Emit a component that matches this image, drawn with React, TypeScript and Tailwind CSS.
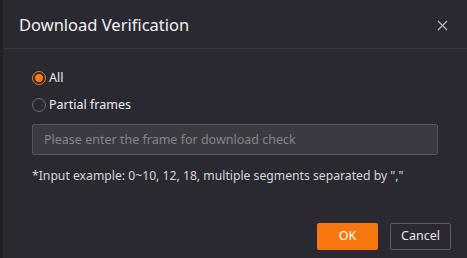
import { useState } from "react";

export default function App() {
  const [mode, setMode] = useState<"all" | "partial">("all");
  const [frames, setFrames] = useState("");

  const options: { key: "all" | "partial"; label: string }[] = [
    { key: "all", label: "All" },
    { key: "partial", label: "Partial frames" },
  ];

  return (
    <div
      className="w-[467px] h-[258px] flex bg-[#1f1f25]"
      style={{ fontFamily: '"Noto Sans", "Open Sans", sans-serif' }}
    >
      <div className="ml-[3px] flex-1 flex flex-col bg-[#2a2931] text-[#e6e6ea]">
        {/* HEADER */}
        <div className="h-[49px] shrink-0 flex items-center justify-between pl-[16px] pr-[19px] border-b border-[#35343c]">
          <h1 className="mt-[2px] text-[16.5px] leading-none text-[#f0f0f2]">Download Verification</h1>
          <button className="text-[#b8b8be] mt-[3px]">
            <svg width="11" height="11" viewBox="0 0 11 11" fill="none">
              <path d="M1 1L10 10M10 1L1 10" stroke="currentColor" strokeWidth="1.2" />
            </svg>
          </button>
        </div>

        {/* BODY */}
        <div className="flex-1 pl-[29px] pt-[20px]">
          <div className="flex flex-col gap-[9px]">
            {options.map((o) => (
              <label
                key={o.key}
                className="flex items-center gap-[3px] h-[18px] cursor-pointer"
                onClick={() => setMode(o.key)}
              >
                <span
                  className={
                    mode === o.key
                      ? "w-[14px] h-[14px] rounded-full border border-[#f57c12] flex items-center justify-center"
                      : "w-[14px] h-[14px] rounded-full border border-[#6b6a72]"
                  }
                >
                  {mode === o.key && <span className="w-[8px] h-[8px] rounded-full bg-[#f57c12]" />}
                </span>
                <span className="text-[12.5px] text-[#ececef]">{o.label}</span>
              </label>
            ))}
          </div>

          <input
            value={frames}
            onChange={(e) => setFrames(e.target.value)}
            placeholder="Please enter the frame for download check"
            className="block mt-[10px] w-[406px] h-[31px] px-[11px] rounded-[2px] bg-[#3b3a43] border border-[#56555d] text-[12.5px] text-[#e6e6ea] placeholder:text-[#84838a] outline-none"
          />

          <p className="mt-[13px] text-[12.2px] leading-[16px] text-[#d6d6da]">
            *Input example: 0~10, 12, 18, multiple segments separated by ","
          </p>
        </div>

        {/* FOOTER */}
        <div className="shrink-0 flex justify-end gap-[12px] pr-[16px] pb-[8px]">
          <button className="w-[61px] h-[27px] rounded-[2px] bg-[#f8770f] text-white text-[12.5px]">OK</button>
          <button className="w-[61px] h-[27px] rounded-[2px] border border-[#5d5c64] text-[#e6e6ea] text-[12.5px]">
            Cancel
          </button>
        </div>
      </div>
    </div>
  );
}
